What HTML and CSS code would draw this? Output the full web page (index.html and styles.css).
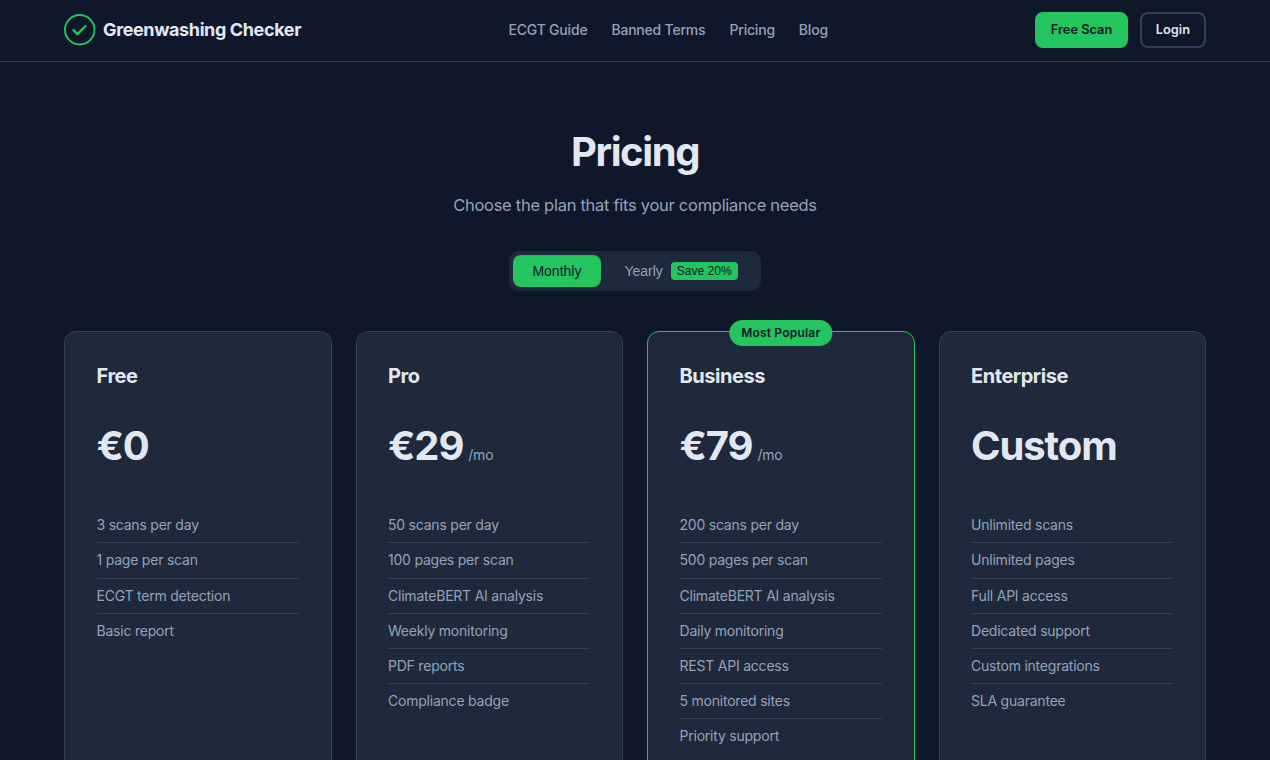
FILE: index.html
```html
<!DOCTYPE html>
<html lang="en">
<head>
<meta charset="utf-8">
<title>Pricing - Greenwashing Checker</title>
<link rel="stylesheet" href="styles.css">
</head>
<body>
<header class="nav">
  <a class="brand" href="#">
    <svg class="brand-icon" width="32" height="32" viewBox="0 0 32 32" fill="none" aria-hidden="true">
      <circle cx="15.75" cy="15.75" r="14.75" stroke="#22c55e" stroke-width="1.9"/>
      <path d="M9.5 16.2l4 4 8-8.2" stroke="#22c55e" stroke-width="2.4" stroke-linecap="round" stroke-linejoin="round"/>
    </svg>
    <span>Greenwashing Checker</span>
  </a>
  <nav class="nav-links">
    <a href="#">ECGT Guide</a>
    <a href="#">Banned Terms</a>
    <a href="#">Pricing</a>
    <a href="#">Blog</a>
  </nav>
  <div class="nav-actions">
    <a class="btn btn-primary" href="#">Free Scan</a>
    <a class="btn btn-outline" href="#">Login</a>
  </div>
</header>
<main class="page">
  <section class="intro">
    <h1>Pricing</h1>
    <p>Choose the plan that fits your compliance needs</p>
    <div class="toggle">
      <button class="toggle-btn active" type="button">Monthly</button>
      <button class="toggle-btn" type="button">Yearly<span class="save">Save 20%</span></button>
    </div>
  </section>
  <section class="plans">
    <article class="plan">
      <h2>Free</h2>
      <div class="price">€0</div>
      <ul>
        <li>3 scans per day</li>
        <li>1 page per scan</li>
        <li>ECGT term detection</li>
        <li>Basic report</li>
      </ul>
    </article>
    <article class="plan">
      <h2>Pro</h2>
      <div class="price">€29<span class="per">/mo</span></div>
      <ul>
        <li>50 scans per day</li>
        <li>100 pages per scan</li>
        <li>ClimateBERT AI analysis</li>
        <li>Weekly monitoring</li>
        <li>PDF reports</li>
        <li>Compliance badge</li>
      </ul>
    </article>
    <article class="plan featured">
      <span class="badge">Most Popular</span>
      <h2>Business</h2>
      <div class="price">€79<span class="per">/mo</span></div>
      <ul>
        <li>200 scans per day</li>
        <li>500 pages per scan</li>
        <li>ClimateBERT AI analysis</li>
        <li>Daily monitoring</li>
        <li>REST API access</li>
        <li>5 monitored sites</li>
        <li>Priority support</li>
      </ul>
    </article>
    <article class="plan">
      <h2>Enterprise</h2>
      <div class="price">Custom</div>
      <ul>
        <li>Unlimited scans</li>
        <li>Unlimited pages</li>
        <li>Full API access</li>
        <li>Dedicated support</li>
        <li>Custom integrations</li>
        <li>SLA guarantee</li>
      </ul>
    </article>
  </section>
</main>
</body>
</html>
```
FILE: styles.css
```css
* { box-sizing: border-box; }
html, body { margin: 0; padding: 0; }
body {
  background: #0f172a;
  color: #e2e8f0;
  font-family: Inter, "Liberation Sans", sans-serif;
  line-height: 1.6;
}
a { color: inherit; text-decoration: none; }
.nav {
  display: flex;
  align-items: center;
  justify-content: space-between;
  height: 62px;
  padding: 0 64px 1px;
  border-bottom: 1px solid #334155;
}
.brand {
  display: flex;
  align-items: center;
  gap: 7px;
  font-size: 18px;
  font-weight: 700;
  letter-spacing: -0.38px;
}
.brand-icon { display: block; }
.nav-links {
  display: flex;
  gap: 24px;
  color: #94a3b8;
  font-size: 14px;
  font-weight: 500;
  letter-spacing: -0.2px;
}
.nav-actions { display: flex; gap: 12px; }
.btn {
  display: block;
  padding: 6px 14px;
  border-radius: 8px;
  font-size: 12.8px;
  font-weight: 600;
  line-height: 20px;
}
.btn-primary { padding: 6px 13.5px; background: #22c55e; color: #0f172a; border: 2px solid #22c55e; }
.btn-outline { border: 2px solid #334155; color: #e2e8f0; }
.page { padding: 66px 64px 0; }
.intro { text-align: center; }
h1 {
  margin: 0 0 15px;
  font-size: 40px;
  line-height: 1.2;
  font-weight: 700;
  letter-spacing: -1.4px;
}
.intro p {
  margin: 0 0 32px;
  color: #94a3b8;
  font-size: 16.5px;
  line-height: 28.16px;
  letter-spacing: -0.28px;
}
.toggle {
  display: flex;
  width: fit-content;
  gap: 4px;
  margin: 0 auto;
  padding: 4px;
  background: #1e293b;
  border-radius: 10px;
}
.toggle-btn {
  display: flex;
  align-items: center;
  gap: 8px;
  height: 32px;
  padding: 0 19.5px;
  border: 0;
  border-radius: 8px;
  background: transparent;
  color: #94a3b8;
  font-family: "Liberation Sans", sans-serif;
  font-size: 14px;
}
.toggle-btn.active { background: #22c55e; color: #0f172a; }
.save {
  padding: 2px 6px;
  border-radius: 4px;
  background: #22c55e;
  color: #0f172a;
  font-size: 12px;
  line-height: 14px;
}
.plans {
  display: grid;
  grid-template-columns: repeat(4, 1fr);
  gap: 24px;
  margin-top: 40px;
}
.plan {
  position: relative;
  padding: 32px 32px 32px 31.5px;
  background: #1e293b;
  border: 1px solid #334155;
  border-radius: 12px;
}
.plan.featured { border-color: #22c55e; }
.badge {
  position: absolute;
  top: -12px;
  left: 50%;
  transform: translateX(-50%);
  padding: 4px 12px;
  border-radius: 20px;
  background: #22c55e;
  color: #0f172a;
  font-size: 12px;
  font-weight: 600;
  line-height: 18px;
  letter-spacing: 0.2px;
  white-space: nowrap;
}
h2 {
  margin: 0 0 26px;
  font-size: 20px;
  line-height: 24px;
  font-weight: 700;
  letter-spacing: -0.45px;
}
.price {
  margin-bottom: 30px;
  font-size: 40px;
  line-height: 64px;
  font-weight: 700;
  letter-spacing: -1.1px;
}
.per {
  margin-left: 5px;
  color: #94a3b8;
  font-size: 14px;
  line-height: 1;
  font-weight: 400;
  letter-spacing: -0.2px;
}
ul { margin: 0; padding: 0; list-style: none; }
li {
  padding: 6px 0;
  border-bottom: 1px solid #334155;
  color: #94a3b8;
  font-size: 14px;
  line-height: 22.2px;
  letter-spacing: -0.22px;
}
li:last-child { border-bottom: 0; }
```
